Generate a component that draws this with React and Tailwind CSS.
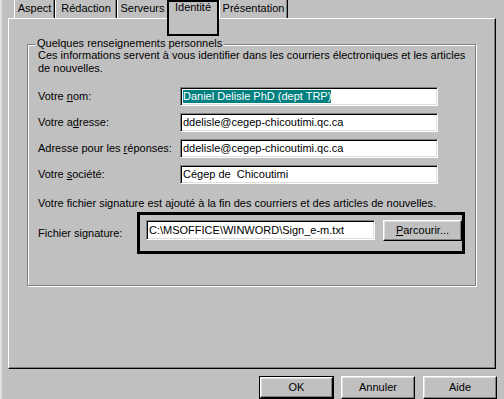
import React from 'react';

const font = { fontFamily: '"Liberation Sans", Arial, sans-serif' };

function U({ children }) {
  return <span className="underline underline-offset-[1px]">{children}</span>;
}

function Tab({ label, width, hideRight }) {
  return (
    <div
      className={`h-[18px] flex items-end justify-center pb-[3px] border-l border-l-white ${
        hideRight ? '' : 'border-r border-r-black shadow-[inset_-1px_0_0_#808080]'
      } ${width}`}
    >
      <span className="leading-[13px]">{label}</span>
    </div>
  );
}

function Field({ label, value, selected }) {
  return (
    <div className="flex items-center h-[19px]">
      <div className="w-[142px] leading-[13px]">{label}</div>
      <div className="w-[258px] h-[19px] bg-white border border-t-[#808080] border-l-[#808080] border-b-white border-r-white shadow-[inset_1px_1px_0_#000,inset_-1px_-1px_0_#dfdfdf] flex items-center pl-[2px] leading-[13px] whitespace-pre overflow-hidden">
        {selected ? <span className="bg-[#008080] text-white">{value}</span> : value}
      </div>
    </div>
  );
}

function Button({ children, def, className = '' }) {
  return (
    <div className={`${def ? 'border border-black' : ''} ${className}`}>
      <div className="h-full w-full border border-t-white border-l-white border-b-black border-r-black shadow-[inset_-1px_-1px_0_#808080,inset_1px_1px_0_#dfdfdf] flex items-center justify-center leading-[13px]">
        {children}
      </div>
    </div>
  );
}

export default function App() {
  return (
    <div
      className="w-[504px] h-[399px] overflow-hidden bg-[#c0c0c0] text-black text-[11px] flex flex-col shadow-[inset_2px_0_0_#dfdfdf]"
      style={font}
    >
      {/* tab strip */}
      <div className="h-[18px] flex pl-[14px] relative z-10">
        <Tab label="Aspect" width="w-[41px]" />
        <Tab label="Rédaction" width="w-[62px]" />
        <Tab label="Serveurs" width="w-[50px]" hideRight />
        <div className="relative w-[52px] h-[20px] bg-[#c0c0c0] border-l border-l-white border-r border-r-black shadow-[inset_-1px_0_0_#808080] flex justify-center pt-[1px]">
          <span className="leading-[13px]">Identité</span>
          <div className="absolute left-[-1px] top-0 w-[52px] h-[36px] border-2 border-black" />
        </div>
        <Tab label="Présentation" width="w-[69px]" />
      </div>

      {/* panel */}
      <div className="ml-[8px] w-[488px] h-[352px] border border-t-white border-l-white border-r-black border-b-black shadow-[inset_-1px_-1px_0_#808080] pl-[18px] pt-[25px]">
        <div className="relative w-[449px] h-[242px] border border-[#808080] shadow-[inset_1px_1px_0_#fff,1px_1px_0_#fff] pl-[10px] pt-[4px]">
          <div className="absolute left-[7px] top-[-8px] px-[2px] bg-[#c0c0c0] leading-[13px]">
            Quelques renseignements personnels
          </div>
          <p className="leading-[13px] pr-[4px]">
            Ces informations servent à vous identifier dans les courriers électroniques et les articles de nouvelles.
          </p>
          <div className="mt-[12px] flex flex-col gap-[7px]">
            <Field label={<>Votre <U>n</U>om:</>} value="Daniel Delisle PhD (dept TRP)" selected />
            <Field label={<>Votre a<U>d</U>resse:</>} value="ddelisle@cegep-chicoutimi.qc.ca" />
            <Field label={<>Adresse pour les <U>r</U>éponses:</>} value="ddelisle@cegep-chicoutimi.qc.ca" />
            <Field label={<>Votre <U>s</U>ociété:</>} value="Cégep de  Chicoutimi" />
          </div>
          <p className="mt-[13px] leading-[13px]">
            Votre fichier signature est ajouté à la fin des courriers et des articles de nouvelles.
          </p>
          <div className="mt-[2px] flex items-center">
            <div className="w-[99px] leading-[13px]">Fichier signature:</div>
            <div className="w-[328px] h-[42px] border-[3px] border-black flex items-start pl-[6px] pt-[5px] gap-[8px]">
              <div className="w-[229px] h-[20px] bg-white border border-t-[#808080] border-l-[#808080] border-b-white border-r-white shadow-[inset_1px_1px_0_#000,inset_-1px_-1px_0_#dfdfdf] flex items-center pl-[2px] leading-[13px] whitespace-nowrap">
                C:\MSOFFICE\WINWORD\Sign_e-m.txt
              </div>
              <Button className="w-[79px] h-[21px]">
                <span><U>P</U>arcourir...</span>
              </Button>
            </div>
          </div>
        </div>
      </div>

      {/* bottom buttons */}
      <div className="mt-[7px] flex pl-[259px] gap-[7px]">
        <Button def className="w-[75px] h-[23px]">OK</Button>
        <Button className="w-[74px] h-[23px]">Annuler</Button>
        <Button className="w-[74px] h-[23px] ml-[1px]">Aide</Button>
      </div>
    </div>
  );
}
